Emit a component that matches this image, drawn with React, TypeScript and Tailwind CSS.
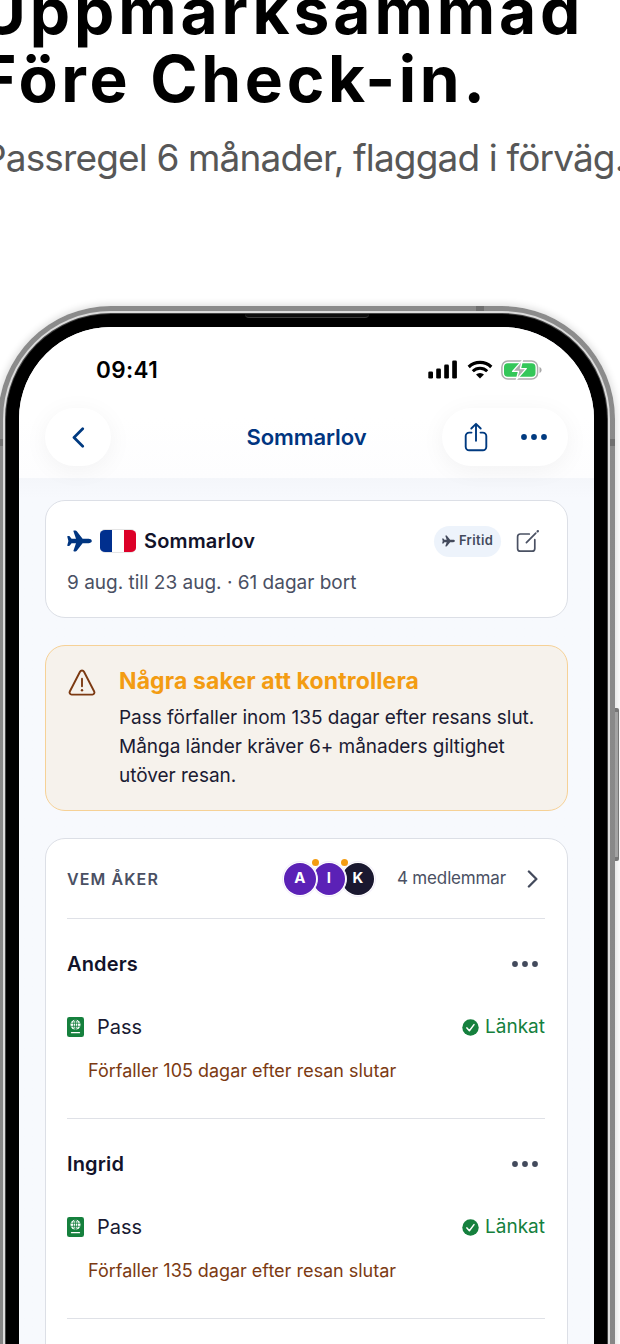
import type { ReactNode } from "react"
import { clsx } from "clsx"

type IconProps = { className?: string }

type Member = {
    name: string
    // Text under passraden
    expiry: string
}

const MEMBERS: Member[] = [
    { name: "Anders", expiry: "Förfaller 105 dagar efter resan slutar" },
    { name: "Ingrid", expiry: "Förfaller 135 dagar efter resan slutar" },
]

const AVATARS = [
    { initial: "A", color: "bg-[#5b21b6]", layer: "z-30", alert: true },
    { initial: "I", color: "bg-[#5b21b6]", layer: "z-20 -ml-[7px]", alert: true },
    { initial: "K", color: "bg-[#1a1830]", layer: "z-10 -ml-[7px]", alert: false },
]

function PlaneIcon({ className }: IconProps) {
    return (
        <svg viewBox="0 0 25 22" fill="currentColor" className={className}>
            <path d="M24.8 11c0 1.3-1.6 2.2-3.2 2.2h-6L9.8 20.7c-.4.5-.8.7-1.4.7H7.1c-.5 0-.8-.4-.6-.9L9 13.2H4.6L2.8 15.6c-.2.3-.5.4-.8.4H.9c-.5 0-.7-.3-.6-.8L1.4 11 .3 6.8C.2 6.3.4 6 .9 6H2c.3 0 .6.1.8.4l1.8 2.4H9L6.5 1.5C6.3 1 6.6.6 7.1.6h1.3c.6 0 1 .2 1.4.7l5.8 7.5h6c1.6 0 3.2.9 3.2 2.2z" />
        </svg>
    )
}

function SignalIcon() {
    return (
        <svg viewBox="0 0 30 19" className="h-[19px] w-[30px]">
            <rect x="0.3" y="11.5" width="4.7" height="7" rx="1.3" />
            <rect x="8.2" y="8.5" width="4.7" height="10" rx="1.3" />
            <rect x="16.2" y="4.6" width="4.7" height="13.9" rx="1.3" />
            <rect x="24.2" y="0.5" width="4.7" height="18" rx="1.3" />
        </svg>
    )
}

function WifiIcon() {
    return (
        <svg viewBox="0 0 26 19" fill="none" stroke="#000" className="h-[19px] w-[26px]">
            <path d="M1.7 7a16.2 16.2 0 0 1 22.6 0" strokeWidth="3.2" />
            <path d="M5.8 11.3a10.3 10.3 0 0 1 14.4 0" strokeWidth="3" />
            <path d="M9 14.6a5.7 5.7 0 0 1 8 0L13 18.6z" fill="#000" stroke="none" />
        </svg>
    )
}

function BatteryIcon() {
    return (
        <svg viewBox="0 0 42 20" className="-ml-px h-5 w-[42px]">
            <rect x="0.9" y="1" width="35.7" height="18" rx="6" fill="#fff" stroke="#adadad" strokeWidth="1.5" />
            <rect x="3" y="3.2" width="31.5" height="13.6" rx="3.8" fill="#34c759" />
            <path d="M38.5 7v6c1.3-.5 2.1-1.6 2.1-3s-.8-2.5-2.1-3z" fill="#a8a8a8" />
            {/* Blixten har vit kant mot det gröna */}
            <path
                d="M21.4.4 11.6 11.4h6l-2.2 8.2 9.8-11h-5.8z"
                fill="#adadad"
                stroke="#fff"
                strokeWidth="1.4"
                strokeLinejoin="round"
            />
        </svg>
    )
}

function ShareIcon() {
    return (
        <svg
            viewBox="0 0 24 30"
            fill="none"
            stroke="#003a80"
            strokeWidth="1.9"
            strokeLinecap="round"
            strokeLinejoin="round"
            className="h-[30px] w-6"
        >
            <path d="M7.5 10.6H5.2a3.5 3.5 0 0 0-3.5 3.5v10.7a3.5 3.5 0 0 0 3.5 3.5h13.6a3.5 3.5 0 0 0 3.5-3.5V14.1a3.5 3.5 0 0 0-3.5-3.5h-2.3" />
            <path d="M12 18.8V1.9M7.3 6.5 12 1.8l4.7 4.7" />
        </svg>
    )
}

function DotsIcon({ className }: IconProps) {
    return (
        <svg viewBox="0 0 26 6" fill="currentColor" className={className}>
            <circle cx="3" cy="3" r="2.9" />
            <circle cx="13" cy="3" r="2.9" />
            <circle cx="23" cy="3" r="2.9" />
        </svg>
    )
}

function ChevronIcon({ className }: IconProps) {
    return (
        <svg
            viewBox="0 0 12 20"
            fill="none"
            stroke="currentColor"
            strokeWidth="2.6"
            strokeLinecap="round"
            strokeLinejoin="round"
            className={className}
        >
            <path d="m2 1.7 8.3 8.3L2 18.3" />
        </svg>
    )
}

function EditIcon() {
    return (
        <svg
            viewBox="0 0 24 24"
            fill="none"
            stroke="#4a5163"
            strokeWidth="1.7"
            strokeLinecap="round"
            strokeLinejoin="round"
            className="h-6 w-6"
        >
            <path d="M13.3 5H4.4a2.8 2.8 0 0 0-2.8 2.8v11.6a2.8 2.8 0 0 0 2.8 2.8H16a2.8 2.8 0 0 0 2.8-2.8v-8.7" />
            <path d="M10.4 13.6 19.8 4.2" />
            <path d="m21.6 2.4.3-.3" strokeWidth="2.2" />
        </svg>
    )
}

function WarningIcon() {
    return (
        <svg
            viewBox="0 0 28 28"
            fill="none"
            stroke="#7c3a12"
            strokeWidth="1.9"
            strokeLinecap="round"
            strokeLinejoin="round"
            className="h-7 w-7"
        >
            <path d="M12 2.7 1.8 22.5a2.1 2.1 0 0 0 1.9 3.1h20.6a2.1 2.1 0 0 0 1.9-3.1L16 2.7a2.25 2.25 0 0 0-4 0z" />
            <path d="M14 9.8v7.4" />
            <circle cx="14" cy="21.2" r="1.2" fill="#7c3a12" stroke="none" />
        </svg>
    )
}

function PassportIcon() {
    return (
        <svg viewBox="0 0 17 20" className="h-5 w-[17px]">
            <rect width="17" height="20" rx="2.3" fill="#15803d" />
            <circle cx="8.5" cy="7.7" r="5" fill="#fff" />
            <g fill="none" stroke="#15803d" strokeWidth="0.8">
                <ellipse cx="8.5" cy="7.7" rx="2" ry="5" />
                <path d="M3.8 6.2h9.4M3.8 9.3h9.4M8.5 2.7v10" />
            </g>
            <path d="M4.5 15.7h8" stroke="#fff" strokeWidth="1.3" strokeLinecap="round" />
        </svg>
    )
}

function CheckIcon() {
    return (
        <svg viewBox="0 0 17 17" className="h-[17px] w-[17px]">
            <circle cx="8.5" cy="8.5" r="8.2" fill="#15803d" />
            <path
                d="m4.9 8.9 2.5 2.9 4.6-6.2"
                fill="none"
                stroke="#fff"
                strokeWidth="1.5"
                strokeLinecap="round"
                strokeLinejoin="round"
            />
        </svg>
    )
}

function Card({ className, children }: { className?: string; children: ReactNode }) {
    return (
        <section className={clsx("rounded-[20px] border", className)}>{children}</section>
    )
}

function Headline() {
    return (
        <header className="h-[306px] shrink-0 whitespace-nowrap">
            <h1 className="-mt-[23px] -ml-[21px] text-[64px] leading-[68px] font-bold text-black">
                <span className="block tracking-[3.9px]">Uppmärksammad</span>
                <span className="block tracking-[3.7px]">Före Check-in.</span>
            </h1>
            <p className="mt-[21px] -ml-[17px] text-[37px] leading-[48px] tracking-[-0.86px] text-[#575757]">
                Passregel 6 månader, flaggad i förväg.
            </p>
        </header>
    )
}

function StatusBar() {
    return (
        <div className="flex h-[81px] items-center pt-1 pr-[51px] pl-[77px]">
            <span className="text-[22.5px] font-semibold tracking-[0.4px] text-black">09:41</span>
            <div className="ml-auto flex items-center gap-[9px]">
                <SignalIcon />
                <WifiIcon />
                <BatteryIcon />
            </div>
        </div>
    )
}

function NavBar() {
    return (
        <div className="flex h-[70px] items-start justify-between px-[26px]">
            <button className="flex h-[58px] w-[66px] items-center justify-center rounded-full bg-white shadow-[0_4px_24px_rgba(0,0,0,0.05)]">
                <ChevronIcon className="h-[21px] w-[13px] rotate-180 text-[#003a80]" />
            </button>
            <h2 className="ml-[60px] text-[22px] leading-[58px] font-semibold tracking-[-0.08px] text-[#003580]">
                Sommarlov
            </h2>
            <div className="flex h-[58px] w-[126px] items-center justify-between rounded-full bg-white pr-[21px] pl-[22px] shadow-[0_4px_24px_rgba(0,0,0,0.05)]">
                <ShareIcon />
                <DotsIcon className="h-1.5 w-[26px] text-[#003a80]" />
            </div>
        </div>
    )
}

function TripCard() {
    return (
        <Card className="h-[118px] border-[#dcdfe6] bg-white pt-6 pr-[22px] pl-[21px]">
            <div className="flex h-8 items-center">
                <PlaneIcon className="h-[22px] w-[25px] text-[#003580]" />
                {/* Franska flaggan */}
                <div className="ml-2 flex h-[24px] w-9 overflow-hidden rounded-[5px] border-y border-[#e5e5e5]">
                    <i className="-my-px flex-1 bg-[#002f8e]" />
                    <i className="flex-1 bg-white" />
                    <i className="-my-px flex-1 bg-[#dc0028]" />
                </div>
                <h3 className="ml-2 text-[20px] font-semibold tracking-[0.15px] text-[#12132a]">Sommarlov</h3>
                <div className="ml-auto flex h-[31px] w-[67px] items-center justify-center gap-1 rounded-full bg-[#edf3fb] text-[#434a5c]">
                    <PlaneIcon className="h-3 w-[13px]" />
                    <span className="text-[13px] font-semibold tracking-[0.35px]">Fritid</span>
                </div>
                <div className="mr-[5px] ml-[15px]">
                    <EditIcon />
                </div>
            </div>
            <p className="mt-[14px] text-[19px] leading-6 text-[#4a5063]">
                9 aug. till 23 aug. · 61 dagar bort
            </p>
        </Card>
    )
}

function WarningCard() {
    return (
        <Card className="mt-[27px] flex h-[166px] border-[#f6d196] bg-[#f6f2ec] pt-5 pl-[22px]">
            <div className="mt-[3px]">
                <WarningIcon />
            </div>
            <div className="ml-[23px] whitespace-nowrap">
                <h3 className="text-[23px] leading-[30px] font-bold tracking-[0.12px] text-[#f39c12]">
                    Några saker att kontrollera
                </h3>
                <p className="mt-[7px] text-[19px] leading-[29px] tracking-[-0.02px] text-[#1b1b33]">
                    Pass förfaller inom 135 dagar efter resans slut.
                    <br />
                    Många länder kräver 6+ månaders giltighet
                    <br />
                    utöver resan.
                </p>
            </div>
        </Card>
    )
}

function MemberSection({ member }: { member: Member }) {
    return (
        <div className="h-[200px] border-t border-[#dfe1e7] pt-[31px]">
            <div className="flex h-7 items-center justify-between pr-[7px]">
                <h4 className="text-[20px] font-semibold tracking-[0.15px] text-[#12132a]">{member.name}</h4>
                <DotsIcon className="h-1.5 w-[26px] text-[#434a5c]" />
            </div>
            <div className="mt-[35px] flex h-7 items-center">
                <PassportIcon />
                <span className="ml-[13px] text-[20px] text-[#1b1b33]">Pass</span>
                <span className="ml-auto flex items-center gap-[6px] text-[19px] text-[#15803d]">
                    <CheckIcon />
                    Länkat
                </span>
            </div>
            <p className="mt-4 ml-[21px] text-[18px] leading-7 text-[#7c3a12]">{member.expiry}</p>
        </div>
    )
}

function MembersCard() {
    return (
        <Card className="mt-[27px] h-[700px] border-[#dcdfe6] bg-white pr-[22px] pl-[21px]">
            <div className="flex h-[79px] items-center">
                <h3 className="text-[16px] font-semibold tracking-[1.1px] text-[#4a5063]">VEM ÅKER</h3>
                <div className="ml-auto flex">
                    {AVATARS.map((a) => (
                        <div
                            key={a.initial}
                            className={clsx("relative rounded-full border border-[#f1ecfa] bg-white p-[1px]", a.layer)}
                        >
                            <div
                                className={clsx(
                                    "flex size-8 items-center justify-center rounded-full text-[15px] font-bold text-white",
                                    a.color,
                                )}
                            >
                                {a.initial}
                            </div>
                            {/* Orange prick = passet behöver ses över */}
                            {a.alert && (
                                <span className="absolute -top-[3px] -right-[2px] size-[7px] rounded-full bg-[#f39c12]" />
                            )}
                        </div>
                    ))}
                </div>
                <span className="ml-[21px] text-[17px] tracking-[-0.15px] text-[#4a5063]">4 medlemmar</span>
                <ChevronIcon className="mr-[7px] ml-[21px] h-[18px] w-[11px] text-[#434a5c]" />
            </div>
            {MEMBERS.map((m) => (
                <MemberSection key={m.name} member={m} />
            ))}
            <div className="border-t border-[#dfe1e7]" />
        </Card>
    )
}

export default function App() {
    return (
        <main className="flex h-[1344px] w-[620px] flex-col overflow-hidden bg-white font-['Inter',sans-serif]">
            <Headline />
            {/* Telefonram: stål, ljus kant, mörk fog och svart ram */}
            <div className="relative -ml-[2px] h-[1200px] w-[617px] shrink-0 rounded-t-[113px] bg-linear-to-b from-[#8b8b8b] to-[#858585] p-[5px] pb-0 shadow-[0_0_7px_2px_rgba(0,0,0,0.12)]">
                {/* Antennband */}
                <span className="absolute top-0 left-[478px] h-[5px] w-2 bg-[#707070]" />
                <span className="absolute top-[133px] left-0 h-[7px] w-[5px] bg-[#707070]" />
                <span className="absolute top-[133px] right-0 h-[7px] w-[5px] bg-[#707070]" />
                {/* Sidoknapp */}
                <span className="absolute top-[402px] -right-[4px] h-[153px] w-[4px] rounded-r-[2px] border-y-4 border-r border-[#777] bg-[#a3a3a3]" />
                <div className="h-full rounded-t-[108px] bg-[#dcdcdc] p-[2px] pb-0">
                    <div className="h-full rounded-t-[106px] bg-[#444] p-px pb-0">
                        <div className="relative h-full rounded-t-[105px] bg-black p-[13px] pb-0">
                            {/* Högtalarspringa */}
                            <span className="absolute top-0 left-[239px] h-1 w-[124px] rounded-b-[4px] border-b border-[#3a3a3a] bg-[#0c0c0c]" />
                            <div className="h-full overflow-hidden rounded-t-[92px] bg-[#f7f9fd]">
                                <div className="bg-linear-to-b from-white from-60% to-[#fdfdfe]">
                                    <StatusBar />
                                    <NavBar />
                                </div>
                                <div className="bg-linear-to-b from-[#f4f6fa] to-[#f7f9fd] to-[20px] px-[26px] pt-[22px]">
                                    <TripCard />
                                    <WarningCard />
                                    <MembersCard />
                                </div>
                            </div>
                        </div>
                    </div>
                </div>
            </div>
        </main>
    )
}
